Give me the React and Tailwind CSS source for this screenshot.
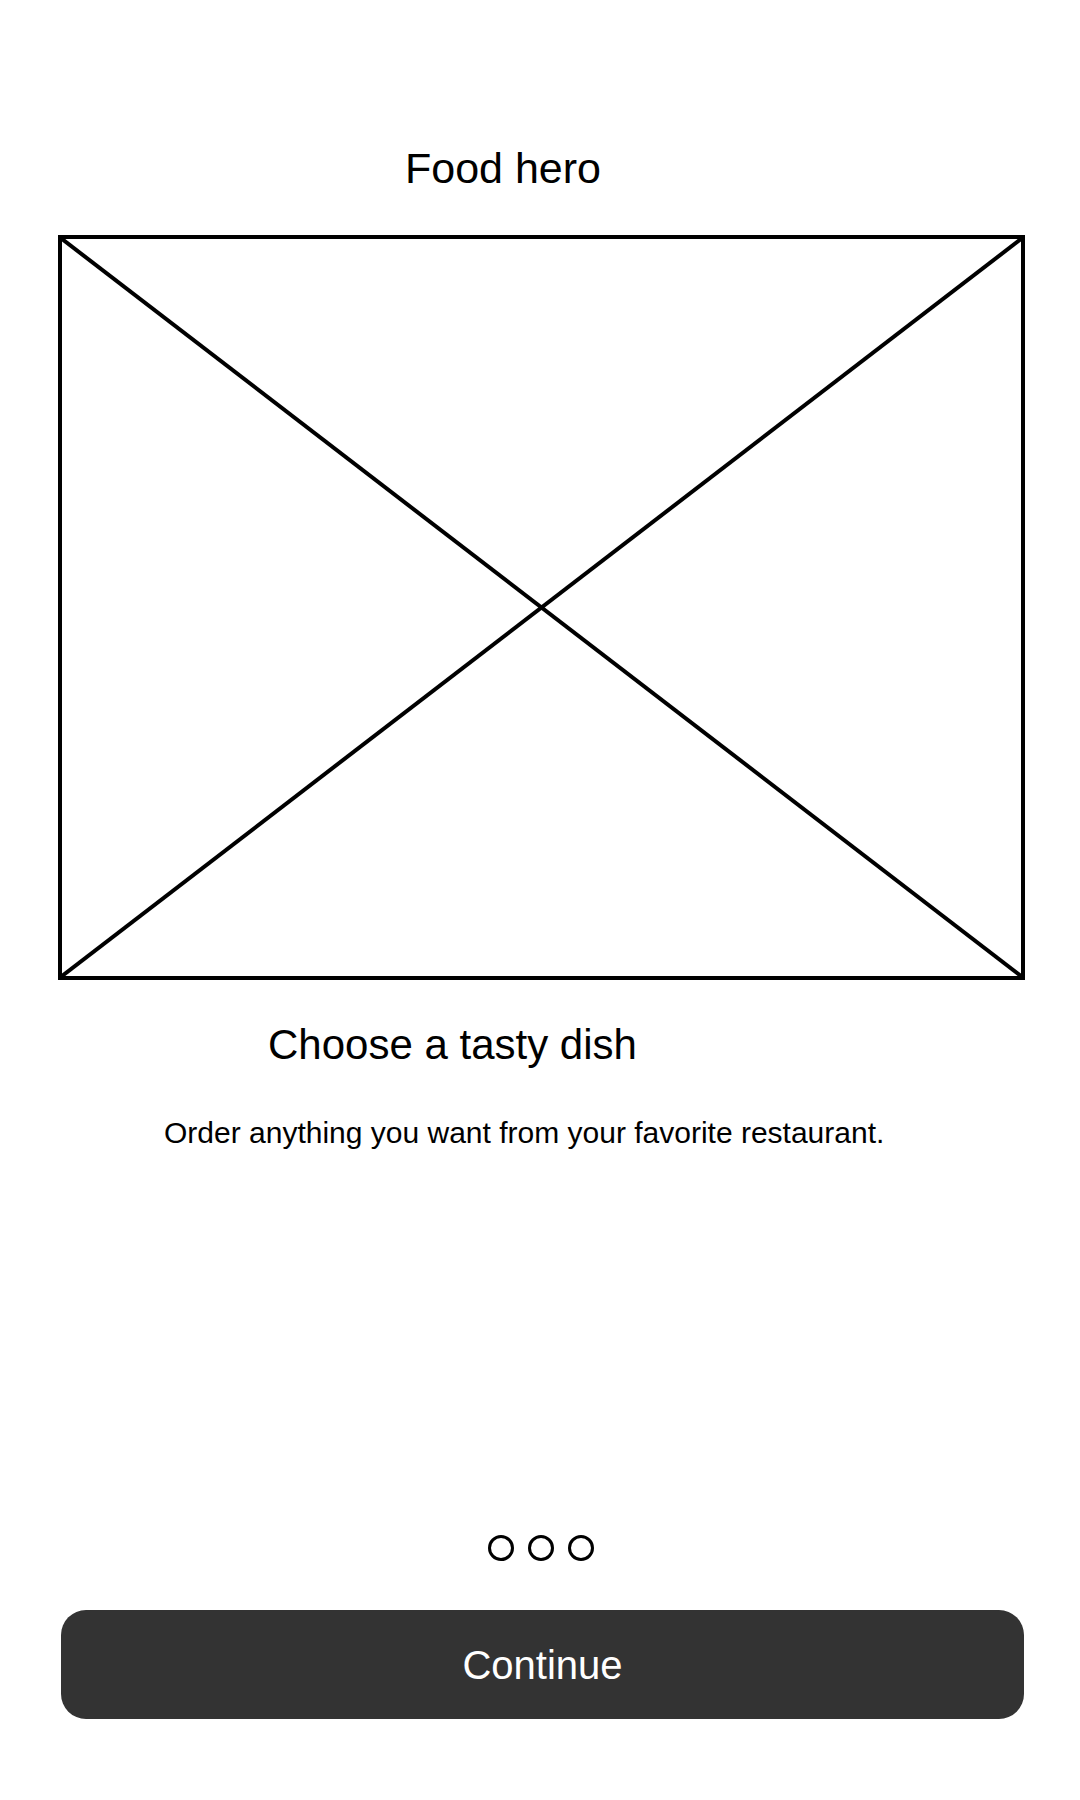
export default function App() {
  const font = { fontFamily: '"Liberation Sans", Arial, sans-serif' };
  return (
    <div className="w-[1080px] h-[1800px] bg-white text-black flex flex-col" style={font}>
      <div className="pt-[147px] pl-[405px] text-[43px] leading-[43px] text-black">Food hero</div>
      <div className="mt-[45px] ml-[58px] w-[967px] h-[745px] border-[4px] border-black relative">
        <svg className="absolute inset-0 w-full h-full" viewBox="0 0 100 100" preserveAspectRatio="none">
          <line x1="0" y1="0" x2="100" y2="100" stroke="black" strokeWidth="4" vectorEffect="non-scaling-stroke" />
          <line x1="100" y1="0" x2="0" y2="100" stroke="black" strokeWidth="4" vectorEffect="non-scaling-stroke" />
        </svg>
      </div>
      <div className="mt-[44px] pl-[268px] text-[42px] leading-[42px]">Choose a tasty dish</div>
      <div className="mt-[52px] pl-[164px] text-[30px] leading-[30px]">Order anything you want from your favorite restaurant.</div>
      <div className="mt-[387px] flex justify-center gap-[14px] pl-[1px]">
        <div className="w-[26px] h-[26px] rounded-full border-[3px] border-black" />
        <div className="w-[26px] h-[26px] rounded-full border-[3px] border-black" />
        <div className="w-[26px] h-[26px] rounded-full border-[3px] border-black" />
      </div>
      <div className="mt-[49px] ml-[61px] w-[963px] h-[109px] rounded-[25px] bg-[#333333] flex items-center justify-center text-white text-[40px] leading-[40px]">
        Continue
      </div>
    </div>
  );
}
